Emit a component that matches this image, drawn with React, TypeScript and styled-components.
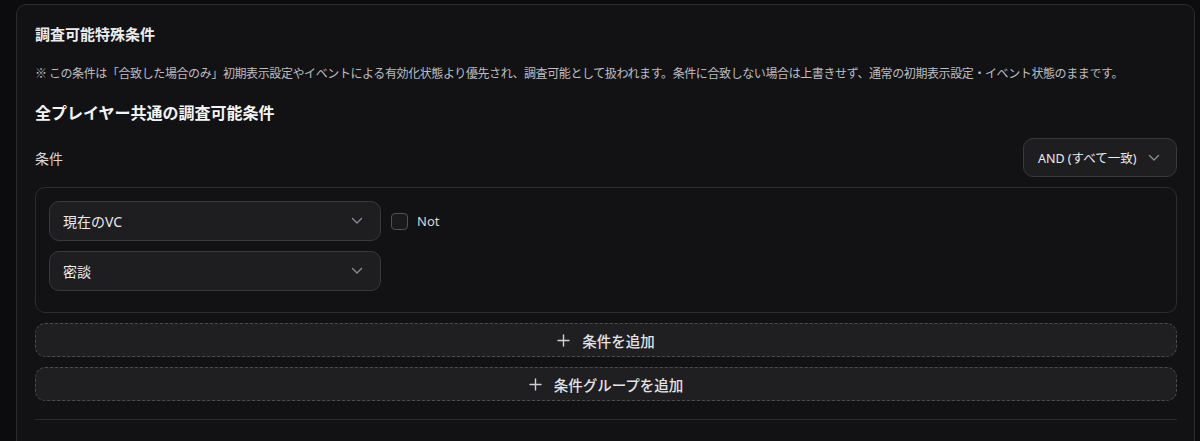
import React from "react";
import styled, { createGlobalStyle } from "styled-components";

const Global = createGlobalStyle`
  html, body { margin: 0; padding: 0; background: #0c0c0e; }
  body { font-family: "Noto Sans CJK JP", "Noto Sans", sans-serif; color: #e8e8ea; }
`;

const Page = styled.div`
  padding: 4px 5px 0 16px;
  height: 441px;
  box-sizing: border-box;
  overflow: hidden;
`;

const Card = styled.section`
  background: #121214;
  border: 1px solid #2a2a2f;
  border-radius: 10px;
  padding: 18px 17px 30px 18px;
  display: flex;
  flex-direction: column;
`;

const Title = styled.h2`
  margin: 0;
  font-size: 15px;
  line-height: 22px;
  font-weight: 700;
  color: #ececee;
`;

const Note = styled.p`
  margin: 18px 0 0;
  font-size: 12px;
  line-height: 20px;
  color: #bdbdc2;
  letter-spacing: -0.4px;
  white-space: nowrap;
`;

const Heading = styled.h3`
  margin: 16px 0 0;
  font-size: 16px;
  line-height: 26px;
  font-weight: 700;
  color: #f4f4f6;
`;

const Row = styled.div`
  margin-top: 13px;
  display: flex;
  align-items: center;
  justify-content: space-between;
`;

const Label = styled.span`
  font-size: 14px;
  color: #d6d6da;
`;

const Select = styled.div<{ $w: number }>`
  box-sizing: border-box;
  width: ${(p) => p.$w}px;
  height: ${(p) => (p.$w < 200 ? 39 : 40)}px;
  background: #1e1e21;
  border: 1px solid #38383d;
  border-radius: 10px;
  display: flex;
  align-items: center;
  justify-content: space-between;
  padding: 0 ${(p) => (p.$w < 200 ? 16 : 17)}px 0 ${(p) => (p.$w < 200 ? 14 : 13)}px;
  font-size: ${(p) => (p.$w < 200 ? 12.5 : 14)}px;
  color: #ececee;
  white-space: nowrap;
  font-family: "Noto Sans", "Noto Sans CJK JP", sans-serif;
`;

const Group = styled.div`
  margin-top: 10px;
  border: 1px solid #2c2c31;
  border-radius: 10px;
  padding: 13px 13px 21px;
  display: flex;
  flex-direction: column;
  gap: 10px;
`;

const CondRow = styled.div`
  display: flex;
  align-items: center;
`;

const Check = styled.span`
  box-sizing: border-box;
  width: 17px;
  height: 17px;
  border: 1.5px solid #505056;
  border-radius: 4px;
  margin-left: 10px;
  background: #1a1a1d;
`;

const CheckLabel = styled.span`
  margin-left: 9px;
  font-size: 13px;
  color: #d8d8dc;
  font-family: "Noto Sans", sans-serif;
`;

const AddButton = styled.button`
  margin-top: 10px;
  height: 34px;
  background: #1f1f22;
  border: 1px dashed #4a4a50;
  border-radius: 10px;
  display: flex;
  align-items: center;
  justify-content: center;
  gap: 12px;
  font-family: "Noto Sans CJK JP", sans-serif;
  font-size: 14.5px;
  font-weight: 500;
  color: #e4e4e8;
  cursor: pointer;
`;

const Divider = styled.hr`
  margin: 18px 0 0;
  border: none;
  border-top: 1px solid #2a2a2e;
`;

const Chevron = () => (
  <svg width="12" height="8" viewBox="0 0 12 8" fill="none">
    <path d="M1.5 1.5 L6 6 L10.5 1.5" stroke="#8a8a90" strokeWidth="1.4" strokeLinecap="round" strokeLinejoin="round" />
  </svg>
);

const Plus = () => (
  <svg width="13" height="13" viewBox="0 0 13 13" fill="none">
    <path d="M6.5 1 V12 M1 6.5 H12" stroke="#d0d0d4" strokeWidth="1.4" strokeLinecap="round" />
  </svg>
);

export default function App() {
  return (
    <>
      <Global />
      <Page>
        <Card>
          <Title>調査可能特殊条件</Title>
          <Note>
            ※ この条件は「合致した場合のみ」初期表示設定やイベントによる有効化状態より優先され、調査可能として扱われます。条件に合致しない場合は上書きせず、通常の初期表示設定・イベント状態のままです。
          </Note>
          <Heading>全プレイヤー共通の調査可能条件</Heading>
          <Row>
            <Label>条件</Label>
            <Select $w={154}>
              <span>AND (すべて一致)</span>
              <Chevron />
            </Select>
          </Row>
          <Group>
            <CondRow>
              <Select $w={332}>
                <span>現在のVC</span>
                <Chevron />
              </Select>
              <Check />
              <CheckLabel>Not</CheckLabel>
            </CondRow>
            <CondRow>
              <Select $w={332}>
                <span>密談</span>
                <Chevron />
              </Select>
            </CondRow>
          </Group>
          <AddButton>
            <Plus />
            <span>条件を追加</span>
          </AddButton>
          <AddButton>
            <Plus />
            <span>条件グループを追加</span>
          </AddButton>
          <Divider />
        </Card>
      </Page>
    </>
  );
}
